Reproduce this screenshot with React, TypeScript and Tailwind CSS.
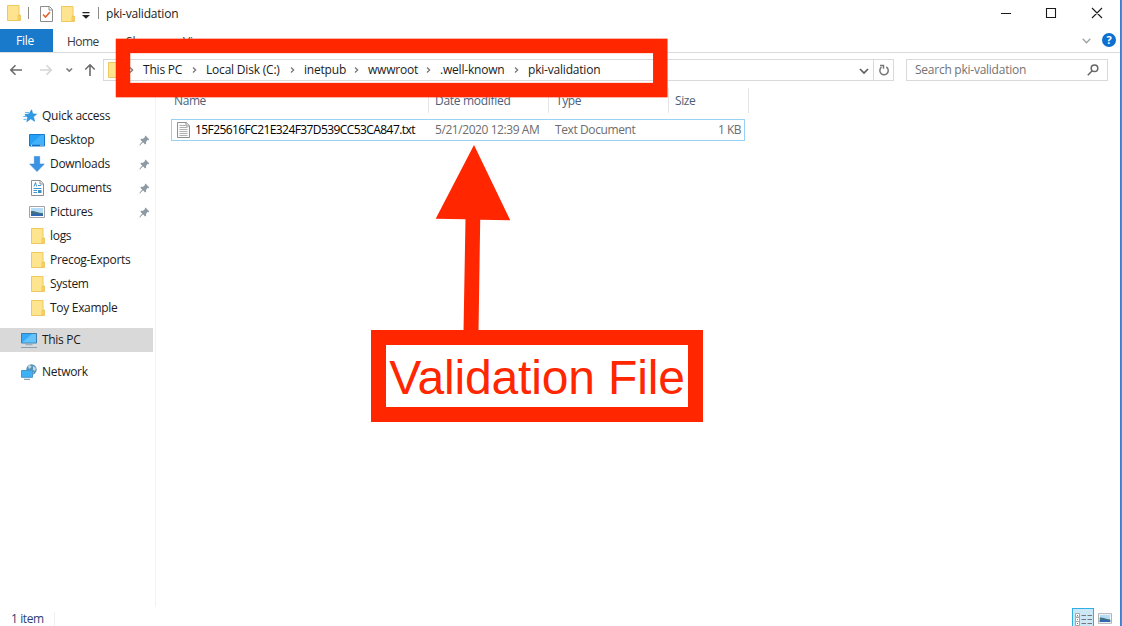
import type { ReactNode } from 'react';

function Folder({ className = '' }: { className?: string }) {
  return (
    <svg className={`shrink-0 ${className}`} width="14" height="16" viewBox="0 0 14 16">
      <path d="M.5.5h11.5v9.5h1.3v5.5H.5z" fill="#ffe48f" stroke="#edc95e" />
      <path d="M11 15V10.5h2.2V15z" fill="#fbd66b" stroke="#e8bf50" strokeWidth=".7" />
    </svg>
  );
}

function Chevron({ className = '' }: { className?: string }) {
  return (
    <svg className={`shrink-0 ${className}`} width="5" height="8" viewBox="0 0 5 8" fill="none" stroke="#777" strokeWidth="1.3">
      <path d="M1 1.5 3.6 4 1 6.5" />
    </svg>
  );
}

function Pin() {
  return (
    <svg className="ml-auto mr-[3px] shrink-0" width="11" height="11" viewBox="0 0 12 12" fill="#8d99a3">
      <path d="M7 .6 11.3 4.9 10.4 5.6 9.7 5.3 7.7 7.4 7.7 9.5 6.7 10.3 4.4 8 1 11.4.4 11.2.6 10.5 3.5 7.2 1.5 5.2 2.4 4.2 4.5 4.2 6.6 2.2 6.3 1.4z" />
    </svg>
  );
}

function Star() {
  return (
    <svg width="14" height="14" viewBox="0 0 14 14">
      <path d="M8.6.8 9.7 4.8 13.6 5.2 10.5 7.7 11.6 12.3 7.8 9.8 3.8 12.7 4.7 8.4 1.8 5.6 6 5z" fill="#2f9be8" stroke="#1c84d0" strokeWidth=".6" />
      <path d="M2 3.6h4M.3 7.5h3.5M.5 10.3h3" stroke="#5db2ee" />
    </svg>
  );
}

function Desktop() {
  return (
    <svg width="16" height="13" viewBox="0 0 16 13">
      <path d="M.5.5h15v11.5H.5z" fill="#25a0f5" stroke="#167bd0" />
      <path d="M1 11 12 1h3v10z" fill="#43b1fa" />
      <path d="M1 11.3h14" stroke="#0f68b8" />
      <path d="M2 11.3h1M11.5 11.3h1M13.5 11.3h1" stroke="#fff" />
    </svg>
  );
}

function Download() {
  return (
    <svg width="16" height="16" viewBox="0 0 16 16">
      <path d="M5.3.5h5.4V8h4.6L8 15.6.7 8h4.6z" fill="#3b93e4" stroke="#2f80d0" strokeWidth=".5" />
    </svg>
  );
}

function Documents() {
  return (
    <svg width="13" height="16" viewBox="0 0 13 16">
      <path d="M.5.5h8.7l3.3 3.3v11.7H.5z" fill="#fff" stroke="#8a8f94" />
      <path d="M9 .5V4h3.5" fill="none" stroke="#8a8f94" />
      <path d="m3 6.5 1.5-4 1 4M7 5.5h3M2.5 8.5h8M2.5 10.5H6M2.5 12.5H6" fill="none" stroke="#3f93cf" />
      <path d="M7 10h3.5v3H7z" fill="#3f8fc0" />
    </svg>
  );
}

function Pictures({ className = '' }: { className?: string }) {
  return (
    <svg className={className} width="16" height="12" viewBox="0 0 16 12">
      <path d="M.5.5h15v11H.5z" fill="#fff" stroke="#a0a4a8" />
      <path d="M2 2h12v8H2z" fill="#b5dcf6" />
      <path d="M2 5c3-.6 6 1.8 12 2V10H2z" fill="#44707f" />
      <path d="M2 8c5-.6 8 .3 12 .4V10H2z" fill="#2d69b3" />
    </svg>
  );
}

function Computer() {
  return (
    <svg width="16" height="15" viewBox="0 0 16 15">
      <path d="M.5.5h15v9.5H.5z" fill="#35a9f7" stroke="#3b7fae" />
      <path d="M1 9.5 11 1h4v8.5z" fill="#64c3fb" />
      <path d="M4.5 11.7h7" stroke="#8da5b8" />
      <path d="M0 14.5h16" stroke="#8a9fb5" />
    </svg>
  );
}

function Network() {
  return (
    <svg width="16" height="16" viewBox="0 0 16 16">
      <circle cx="10.5" cy="5.5" r="5.2" fill="#5b93b8" />
      <path d="M7 2c2-1.5 3 0 3.5 1L8 5zM12 2l3 2-1 3-2-1zM9 9l3-1 1 1-2 1.6z" fill="#bcdcea" />
      <path d="M.5 6.5h11v6.8H.5z" fill="#3db0f6" stroke="#4a96c8" />
      <path d="M3 15.3h6" stroke="#6d8ca6" />
    </svg>
  );
}

function TextFile() {
  return (
    <svg className="mb-px shrink-0" width="13" height="16" viewBox="0 0 13 16">
      <path d="M.5.5h8.7l3.3 3.3v11.7H.5z" fill="#fafafa" stroke="#8f8f8f" />
      <path d="M9 .5V4h3.5" fill="none" stroke="#8f8f8f" />
      <path d="M2.5 3.5H8M2.5 5.5h8M2.5 7.5h8M2.5 9.5h8M2.5 11.5h8M2.5 13.5h8" stroke="#b0b0b0" />
    </svg>
  );
}

function NavItem({ icon, label, pinned, root, selected }: {
  icon: ReactNode; label: string; pinned?: boolean; root?: boolean; selected?: boolean;
}) {
  return (
    <div className={`flex h-6 w-[153px] items-center ${root ? 'pl-[21px]' : 'pl-[29px]'} ${selected ? 'bg-[#d9d9d9]' : ''}`}>
      <span className="flex w-4 shrink-0 justify-center">{icon}</span>
      <span className="ml-[5px] tracking-[-0.3px]">{label}</span>
      {pinned && <Pin />}
    </div>
  );
}

const crumbs = [
  { label: 'This PC', cls: 'w-[63px]' },
  { label: 'Local Disk (C:)', cls: 'w-[98px]' },
  { label: 'inetpub', cls: 'w-[64px]' },
  { label: 'wwwroot', cls: 'w-[72px]' },
  { label: '.well-known', cls: 'w-[88px]' },
  { label: 'pki-validation', cls: 'w-[90px]' },
];

export default function App() {
  return (
    <div className="relative flex h-[626px] w-[1122px] flex-col overflow-hidden whitespace-nowrap border-r border-[#e0566f] bg-white font-['Open_Sans','Noto_Sans',sans-serif] text-[12px] leading-4 tracking-[-0.2px] text-[#1b1b1b]">
      <div className="flex min-h-0 flex-1 flex-col border-r border-[#3b7fd0]">
        <header className="flex h-[29px] shrink-0 items-center">
          <Folder className="mb-[3px] ml-[7px]" />
          <span className="mb-[3px] ml-[7px] h-3 w-px bg-[#8a8a8a]" />
          <svg className="mb-[1px] ml-[11px]" width="13" height="16" viewBox="0 0 13 16">
            <path d="M.5.5h9l3 3v12H.5z" fill="#fff" stroke="#8c8c8c" />
            <path d="M9 .5V4h3.5" fill="none" stroke="#8c8c8c" />
            <path d="m3 8.5 2.5 2.5L10 6" fill="none" stroke="#e8622a" strokeWidth="1.6" />
          </svg>
          <Folder className="mb-[1px] ml-[8px]" />
          <svg className="ml-[7px] mt-[1px]" width="8" height="7" viewBox="0 0 8 7" fill="#222">
            <path d="M.5 0h7v1.2h-7zM0 3h8L4 6.7z" />
          </svg>
          <span className="mb-[3px] ml-[8px] h-3 w-px bg-[#8a8a8a]" />
          <span className="mb-px ml-[7px]">pki-validation</span>
          <svg className="mb-[3px] ml-auto mr-[16px]" width="103" height="12" viewBox="0 0 103 12" fill="none" stroke="#1a1a1a" strokeWidth="1.1">
            <path d="M0 6.5h10M45.5 1.5h9v9h-9zM91 1l10 10M101 1 91 11" />
          </svg>
        </header>

        <nav className="flex h-6 shrink-0 items-center border-b border-[#dadbdc]">
          <span className="flex h-full w-[53px] items-center justify-center bg-[#1979ca] pr-[3px] pt-px text-white">File</span>
          <span className="ml-[14px] w-[59px] pt-[2px] tracking-[-0.55px] text-[#3b3b3b]">Home</span>
          <span className="w-[57px] pt-[2px] text-[#3b3b3b]">Share</span>
          <span className="pt-[2px] text-[#3b3b3b]">View</span>
          <svg className="ml-auto" width="9" height="6" viewBox="0 0 9 6" fill="none" stroke="#a0a0a0" strokeWidth="1.3">
            <path d="m.7.7 3.8 4 3.8-4" />
          </svg>
          <span className="mb-px ml-[11px] mr-[4px] flex size-[14px] items-center justify-center rounded-full bg-[#0d6fd0] text-[11px] font-bold text-white">?</span>
        </nav>

        <div className="flex h-[35px] shrink-0 items-start pt-[6px]">
          <svg className="mt-[4px] shrink-0" width="103" height="14" viewBox="0 0 103 14" fill="none" strokeWidth="1.6">
            <path d="M22 7H11M15.5 2.3 10.8 7l4.7 4.7" stroke="#6b6b6b" />
            <path d="M40 7h11M46.5 2.3 51.2 7l-4.7 4.7" stroke="#d5d5d5" />
            <path d="m66.5 5.5 2.8 2.7 2.8-2.7" stroke="#7b7b7b" />
            <path d="M90 13V2M85.3 6.5 90 1.8l4.7 4.7" stroke="#6b6b6b" />
          </svg>
          <div className="flex h-[22px] w-[791px] items-center border border-[#d9d9d9]">
            <Folder className="ml-[4px]" />
            <Chevron className="ml-[7px] mr-[9px]" />
            {crumbs.map((c, i) => (
              <span key={c.label} className={`flex items-center ${c.cls}`}>
                <span className="pb-px">{c.label}</span>
                {i < crumbs.length - 1 && <Chevron className="ml-auto mr-[9px]" />}
              </span>
            ))}
            <svg className="ml-auto mr-[4px] mt-[3px]" width="10" height="7" viewBox="0 0 10 7" fill="none" stroke="#606060" strokeWidth="1.7">
              <path d="m1 1 4 4 4-4" />
            </svg>
            <span className="flex h-full w-[20px] items-center justify-center border-l border-[#d9d9d9]">
              <svg width="12" height="12" viewBox="0 0 12 12" fill="none" stroke="#777" strokeWidth="1.5">
                <path d="M8.3 3A4.2 4.2 0 1 1 3.5 3.2M2 1.5h3.5v3.3" />
              </svg>
            </span>
          </div>
          <div className="ml-[12px] flex h-[22px] w-[202px] items-center border border-[#d9d9d9] pl-[8px] pr-[8px] text-[#737373]">
            <span className="tracking-[-0.25px]">Search pki-validation</span>
            <svg className="ml-auto" width="12" height="12" viewBox="0 0 12 12" fill="none" stroke="#666" strokeWidth="1.5">
              <circle cx="7.5" cy="4.3" r="3.3" />
              <path d="M5.2 6.7.8 11.2" />
            </svg>
          </div>
        </div>

        <div className="flex min-h-0 flex-1">
          <aside className="w-[156px] shrink-0 border-r border-[#f3f3f3] pt-[16px]">
            <div className="flex h-6 items-center pl-[23px]">
              <Star />
              <span className="ml-[5px] tracking-[-0.25px]">Quick access</span>
            </div>
            <NavItem icon={<Desktop />} label="Desktop" pinned />
            <NavItem icon={<Download />} label="Downloads" pinned />
            <NavItem icon={<Documents />} label="Documents" pinned />
            <NavItem icon={<Pictures />} label="Pictures" pinned />
            <NavItem icon={<Folder className="ml-[2px]" />} label="logs" />
            <NavItem icon={<Folder className="ml-[2px]" />} label="Precog-Exports" />
            <NavItem icon={<Folder className="ml-[2px]" />} label="System" />
            <NavItem icon={<Folder className="ml-[2px]" />} label="Toy Example" />
            <div className="mt-2">
              <NavItem root selected icon={<Computer />} label="This PC" />
            </div>
            <div className="mt-2">
              <NavItem root icon={<Network />} label="Network" />
            </div>
          </aside>

          <main className="flex-1 pl-[15px]">
            <div className="flex h-[25px] w-[578px] text-[#4c607a]">
              <span className="flex w-[258px] items-center border-r border-[#e5e5e5] pl-[3px] pt-px tracking-[-0.4px]">Name</span>
              <span className="flex w-[120px] items-center border-r border-[#e5e5e5] pl-[6px] pt-px tracking-[-0.3px]">Date modified</span>
              <span className="flex w-[120px] items-center border-r border-[#e5e5e5] pl-[7px] pt-px tracking-[-0.4px]">Type</span>
              <span className="flex flex-1 items-center border-r border-[#e5e5e5] pl-[6px] pt-px tracking-[-0.4px]">Size</span>
            </div>
            <div className="mt-[6px] flex h-[22px] w-[574px] items-center border border-[#99d1f5] pl-[5px] text-[#6d6d6d]">
              <TextFile />
              <span className="ml-[5px] w-[240px] tracking-[-0.58px] text-black">15F25616FC21E324F37D539CC53CA847.txt</span>
              <span className="w-[120px] tracking-[-0.43px]">5/21/2020 12:39 AM</span>
              <span className="tracking-[-0.4px]">Text Document</span>
              <span className="ml-auto mr-[3px] tracking-[-0.5px]">1 KB</span>
            </div>
          </main>
        </div>

        <footer className="flex h-[19px] shrink-0 items-start">
          <span className="ml-[11px] mt-[5px] w-[44px] border-r border-[#f0f0f0] leading-[14px] tracking-[-0.4px] text-[#2c3e73]">1 item</span>
          <span className="ml-auto mt-px flex h-[18px] w-[22px] items-start justify-center border border-b-0 border-[#30aee5] bg-[#cce8f7] pt-[4px]">
            <svg width="17" height="14" viewBox="0 0 17 14" fill="none">
              <path d="M.5.5h4v3.500h-4zM.5 4.500h4v4h-4zM.5 8.500h4v4h-4z" fill="#fff" stroke="#a5a5a5" />
              <path d="M2 2.500h1M2 6.500h1" stroke="#5a8ac0" />
              <path d="M2 10.500h1" stroke="#d44" />
              <path d="M6.500 2.500H11M12.500 2.500H17M6.500 6.500H11M12.500 6.500H17M6.500 10.500H11M12.500 10.500H17" stroke="#777" />
            </svg>
          </span>
          <Pictures className="ml-[4px] mr-[8px] mt-[6px] h-[11px] w-[14px]" />
        </footer>
      </div>

      <svg className="absolute left-0 top-0" width="720" height="340" viewBox="0 0 720 340">
        <rect x="123" y="45.9" width="537.3" height="44.2" fill="none" stroke="#ff2600" strokeWidth="14.5" />
        <path d="M474 145 510.2 220.2 480.2 219.7 478.5 332H463.5L465.5 219.3 435.7 218.7z" fill="#ff2600" />
      </svg>
      <div className="absolute left-[371px] top-[330px] flex h-[92px] w-[332px] items-center justify-center border-[15px] border-[#ff2600] bg-white pt-[4px] font-['Liberation_Sans',Arial,sans-serif] text-[48px] leading-[62px] tracking-[-0.15px] text-[#ff2600]">
        Validation File
      </div>
    </div>
  );
}
